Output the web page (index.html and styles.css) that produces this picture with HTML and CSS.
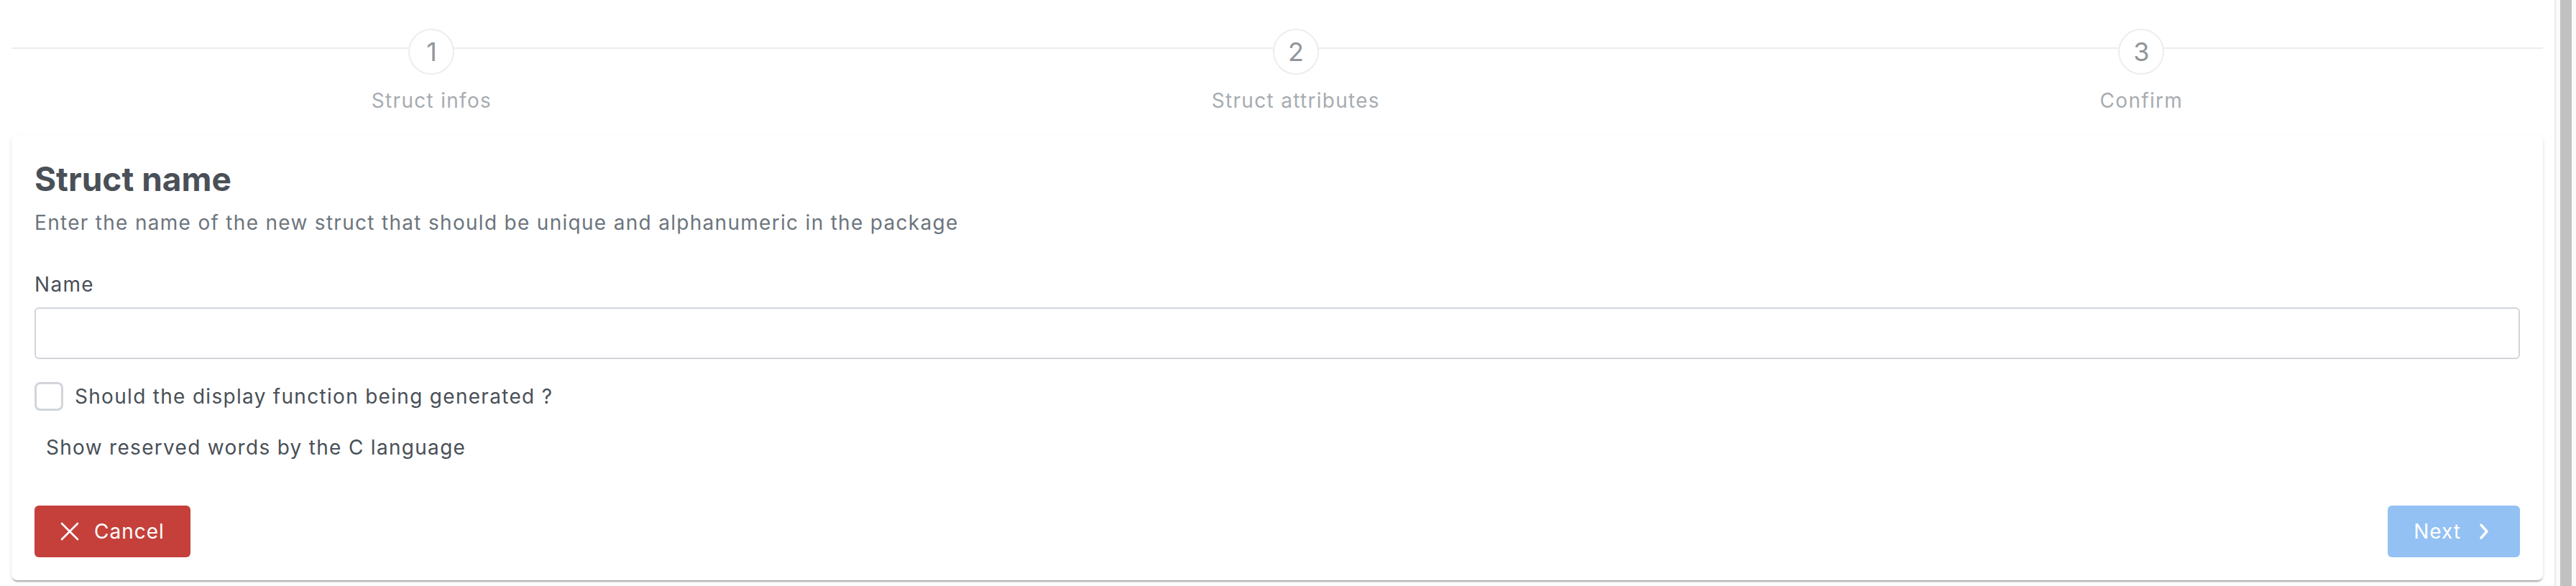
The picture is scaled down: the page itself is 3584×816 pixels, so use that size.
FILE: index.html
```html
<!DOCTYPE html>
<html lang="en">
<head>
<meta charset="utf-8">
<title>New struct</title>
<link rel="stylesheet" href="styles.css">
</head>
<body>
<div class="page">
  <main class="main">
    <ol class="steps">
      <li class="step">
        <span class="step-number">1</span>
        <span class="step-title">Struct infos</span>
      </li>
      <li class="step">
        <span class="step-number">2</span>
        <span class="step-title">Struct attributes</span>
      </li>
      <li class="step">
        <span class="step-number">3</span>
        <span class="step-title">Confirm</span>
      </li>
    </ol>

    <section class="card">
      <h1 class="card-title">Struct name</h1>
      <p class="card-subtitle">Enter the name of the new struct that should be unique and alphanumeric in the package</p>

      <label class="field-label" for="name">Name</label>
      <input class="text-input" id="name" type="text">

      <label class="check-row">
        <span class="checkbox"></span>
        <span class="check-label">Should the display function being generated ?</span>
      </label>

      <button type="button" class="reserved">Show reserved words by the C language</button>

      <div class="card-footer">
        <button type="button" class="btn btn-danger">
          <svg class="btn-icon-x" width="26" height="26" viewBox="0 0 26 26" aria-hidden="true"><path d="M2 2 L24 24 M24 2 L2 24" fill="none" stroke="#fff" stroke-width="2.6" stroke-linecap="round"/></svg>
          <span>Cancel</span>
        </button>
        <button type="button" class="btn btn-primary" disabled>
          <span>Next</span>
          <svg class="btn-icon-chev" width="16" height="22" viewBox="0 0 16 22" aria-hidden="true"><path d="M4 2 L12 11 L4 20" fill="none" stroke="#fff" stroke-width="3.4" stroke-linecap="round" stroke-linejoin="round"/></svg>
        </button>
      </div>
    </section>
  </main>
  <div class="scrollbar"><div class="scrollbar-thumb"></div></div>
</div>
</body>
</html>
```
FILE: styles.css
```css
html, body {
  margin: 0;
  padding: 0;
  background: #ffffff;
}
body {
  font-family: "Inter", "Liberation Sans", sans-serif;
  font-size: 28px;
  letter-spacing: 1.3px;
  color: #495057;
}
.page {
  display: flex;
  height: 816px;
  overflow: hidden;
}
.main {
  flex: 1 1 auto;
  padding: 0 16px;
  min-width: 0;
}

/* steps */
.steps {
  display: flex;
  list-style: none;
  margin: 0;
  padding: 0;
}
.step {
  flex: 1 1 auto;
  display: flex;
  flex-direction: column;
  align-items: center;
  padding-top: 40px;
  background: linear-gradient(#ebedf0, #ebedf0) 0 66px / 100% 2px no-repeat;
}
.step-number {
  width: 64px;
  height: 64px;
  box-sizing: border-box;
  border: 2px solid #ebedf0;
  border-radius: 50%;
  background: #ffffff;
  display: flex;
  align-items: center;
  justify-content: center;
  font-size: 36px;
  letter-spacing: 0;
  color: #92969a;
}
.step-title {
  margin-top: 19px;
  line-height: 34px;
  color: #a7acb1;
  white-space: nowrap;
}

/* card */
.card {
  margin-top: 31px;
  background: #ffffff;
  border-radius: 8px;
  box-shadow: 0 4px 2px -2px rgba(0,0,0,.2), 0 2px 2px 0 rgba(0,0,0,.12), 0 2px 6px 0 rgba(0,0,0,.08);
  padding: 33px 32px 32px;
  display: flex;
  flex-direction: column;
  align-items: flex-start;
}
.card-title {
  margin: 0;
  font-size: 46px;
  line-height: 56px;
  font-weight: 700;
  letter-spacing: 0;
  color: #495057;
}
.card-subtitle {
  margin: 13px 0 0;
  line-height: 40px;
  color: #6c757d;
}
.field-label {
  margin-top: 46px;
  line-height: 40px;
}
.text-input {
  margin-top: 12px;
  align-self: stretch;
  box-sizing: border-box;
  height: 72px;
  border: 2px solid #d1d5da;
  border-radius: 6px;
  background: #ffffff;
  font: inherit;
  padding: 0 22px;
  outline: none;
}
.check-row {
  margin-top: 32px;
  display: flex;
  align-items: center;
  height: 40px;
}
.checkbox {
  width: 40px;
  height: 40px;
  box-sizing: border-box;
  border: 3px solid #d1d5da;
  border-radius: 8px;
  background: #ffffff;
}
.check-label {
  margin-left: 16px;
  line-height: 40px;
}
.reserved {
  margin-top: 31px;
  padding: 0 16px;
  border: 0;
  background: transparent;
  font: inherit;
  letter-spacing: 1.3px;
  color: #495057;
  line-height: 40px;
}
.card-footer {
  align-self: stretch;
  margin-top: 61px;
  display: flex;
  justify-content: space-between;
  align-items: center;
}
.btn {
  height: 72px;
  border: 0;
  border-radius: 6px;
  display: flex;
  align-items: center;
  font: inherit;
  letter-spacing: 1px;
  color: #ffffff;
}
.btn-danger {
  background: #c5403a;
  padding: 0 36px;
}
.btn-primary {
  background: #93c1f3;
  padding: 0 42px 0 36px;
}
.btn-icon-x {
  margin-right: 21px;
}
.btn-icon-chev {
  margin-left: 24px;
}

/* scrollbar gutter */
.scrollbar {
  flex: 0 0 30px;
  box-sizing: border-box;
  border-left: 2px solid #e9e9e9;
  background: #fafafa;
  padding: 0 6px;
}
.scrollbar-thumb {
  height: 100%;
  background: #c1c1c1;
}
```
